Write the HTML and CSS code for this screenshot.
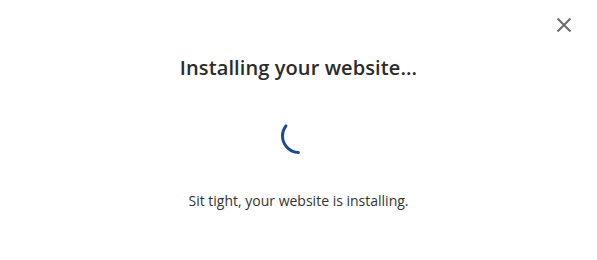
FILE: index.html
```html
<!DOCTYPE html>
<html>
<head>
<meta charset="utf-8">
<link rel="stylesheet" href="styles.css">
</head>
<body>
<div class="modal">
  <button class="close" aria-label="Close">
    <svg width="16" height="16" viewBox="0 0 16 16"><path d="M1.5 1.5 L14.5 14.5 M14.5 1.5 L1.5 14.5" stroke="#6b6b6b" stroke-width="2" fill="none"/></svg>
  </button>
  <h1 class="title">Installing your website...</h1>
  <div class="spinner">
    <svg width="40" height="40" viewBox="0 0 40 40"><circle cx="20" cy="20" r="16.5" fill="none" stroke="#1c4a8a" stroke-width="3" stroke-linecap="round" stroke-dasharray="36 200" transform="rotate(92 20 20)"/></svg>
  </div>
  <p class="text">Sit tight, your website is installing.</p>
</div>
</body>
</html>
```
FILE: styles.css
```css
html, body {
  margin: 0;
  padding: 0;
  background: #fff;
}
.modal {
  position: relative;
  width: 597px;
  height: 260px;
  display: flex;
  flex-direction: column;
  align-items: center;
  font-family: "Open Sans", sans-serif;
  color: #2b2b2b;
  box-sizing: border-box;
  padding-top: 54px;
}
.close {
  position: absolute;
  top: 17px;
  left: 556px;
  padding: 0;
  border: 0;
  background: none;
  width: 16px;
  height: 16px;
  display: block;
}
.close svg { display: block; }
.title {
  margin: 0;
  font-size: 20px;
  font-weight: 600;
  line-height: 28px;
  letter-spacing: 0.1px;
}
.spinner {
  margin-top: 34px;
  width: 40px;
  height: 40px;
}
.spinner svg { display: block; }
.text {
  margin: 35px 0 0;
  font-size: 14px;
  line-height: 20px;
  color: #333;
}
```
